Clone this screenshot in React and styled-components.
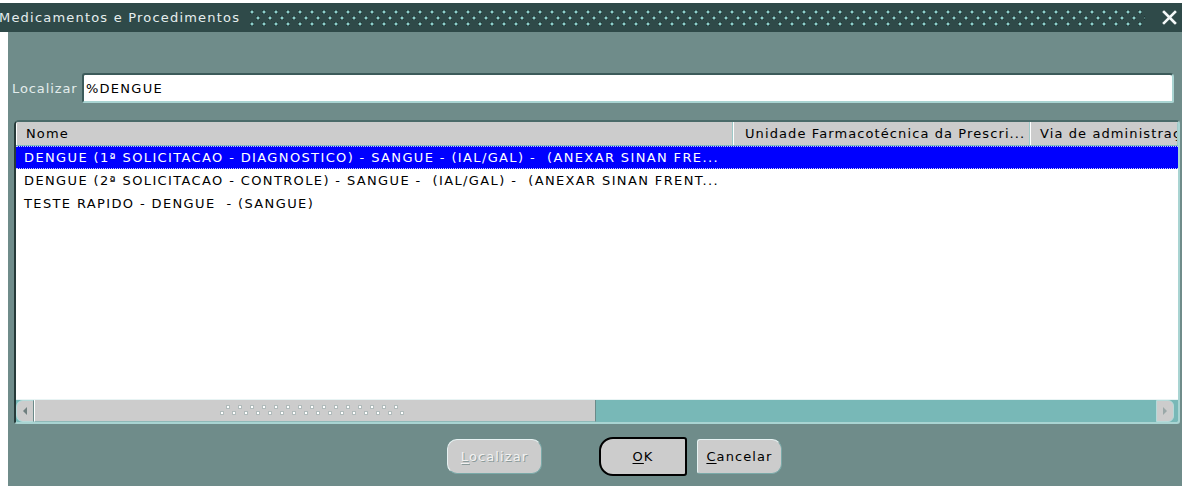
import React from "react";
import styled, { createGlobalStyle } from "styled-components";

const Global = createGlobalStyle`
  html, body { margin: 0; padding: 0; background: #ffffff; }
  body { font-family: "DejaVu Sans", "Liberation Sans", sans-serif; }
  * { box-sizing: border-box; }
`;

const Window = styled.div`
  width: 1182px;
  height: 486px;
  display: flex;
  flex-direction: column;
  padding-top: 3px;
  overflow: hidden;
  font-size: 13px;
  letter-spacing: 1.25px;
`;

const TitleBar = styled.div`
  height: 29px;
  flex: none;
  background: #2f4a49;
  display: flex;
  align-items: center;
  padding-right: 5px;
`;

const TitleText = styled.span`
  color: #e6eeee;
  white-space: nowrap;
  margin-left: -1px;
  letter-spacing: 1.2px;
`;

/* raised teal studs along the title bar, drawn as a tiled pattern */
const Grip = styled.div`
  flex: 1;
  height: 16px;
  margin: 0 16px 0 10px;
  background-image:
    radial-gradient(circle at 2px 2px, #8fd0cc 1.2px, #0f2423 1.9px, transparent 2.4px),
    radial-gradient(circle at 2px 2px, #8fd0cc 1.2px, #0f2423 1.9px, transparent 2.4px);
  background-size: 12px 12px, 12px 12px;
  background-position: 0 0, 6px 6px;
`;

const CloseBox = styled.div`
  width: 16px;
  height: 16px;
  display: flex;
  align-items: center;
  justify-content: center;
`;

const Body = styled.div`
  flex: 1;
  margin-left: 8px;
  background: #6f8c8a;
  display: flex;
  flex-direction: column;
  padding: 41px 8px 0 4px;
`;

const SearchRow = styled.div`
  display: flex;
  align-items: center;
  height: 30px;
`;

const Label = styled.label`
  color: #e3ecec;
  letter-spacing: 0.9px;
  width: 70px;
  flex: none;
  white-space: nowrap;
  overflow: hidden;
`;

const Input = styled.div`
  flex: 1;
  height: 30px;
  background: #ffffff;
  border: 2px solid #a9d4d2;
  border-top-color: #3c5b5a;
  border-left-color: #3c5b5a;
  border-radius: 3px 4px 2px 2px;
  display: flex;
  align-items: center;
  padding-left: 2px;
  color: #000;
`;

const Grid = styled.div`
  margin: 17px -6px 0 2px;
  height: 304px;
  display: flex;
  flex-direction: column;
  border: 2px solid #a9d4d2;
  border-left-color: #263a39;
  border-top-color: #4a6a69;
  border-radius: 5px 4px 3px 3px;
  background: #ffffff;
  overflow: hidden;
`;

const HeaderRow = styled.div`
  display: flex;
  height: 24px;
  flex: none;
  background: #cccccc;
  border-bottom: 1px solid #7fbcbb;
`;

const HeaderCell = styled.div`
  width: ${(p) => p.$w}px;
  flex: ${(p) => (p.$grow ? 1 : "none")};
  padding-left: ${(p) => p.$pad}px;
  display: flex;
  align-items: center;
  letter-spacing: 1.1px;
  color: #000;
  white-space: nowrap;
  overflow: hidden;
  border-left: 1px solid #ffffff;
  border-right: 1px solid #9ec9c8;
`;

const Rows = styled.div`
  flex: 1;
  display: flex;
  flex-direction: column;
  background: #ffffff;
`;

const Row = styled.div`
  height: 23px;
  flex: none;
  display: flex;
  align-items: center;
  padding-left: 8px;
  white-space: pre;
  letter-spacing: 1.37px;
  color: ${(p) => (p.$selected ? "#ffffff" : "#000000")};
  background: ${(p) => (p.$selected ? "#0000ff" : "transparent")};
  border-top: 1px dotted ${(p) => (p.$selected ? "#c8c8ff" : "transparent")};
  border-bottom: 1px dotted ${(p) => (p.$selected ? "#c8c8ff" : "transparent")};
`;

const ScrollBar = styled.div`
  height: 23px;
  flex: none;
  display: flex;
  background: #78b8b7;
  border-top: 1px solid #e8f4f4;
  padding-right: 4px;
`;

const ArrowBtn = styled.div`
  width: 18px;
  flex: none;
  background: #cccccc;
  display: flex;
  align-items: center;
  justify-content: center;
  border-radius: ${(p) => (p.$side === "left" ? "7px 0 0 7px" : "0 6px 6px 0")};
  border: 1px solid #b5dad9;
  border-right-color: ${(p) => (p.$side === "left" ? "#6b8a89" : "#b5dad9")};
  margin-left: ${(p) => (p.$side === "right" ? "auto" : "0")};
`;

const Thumb = styled.div`
  width: 562px;
  flex: none;
  background: #cccccc;
  border-left: 1px solid #ffffff;
  border-right: 1px solid #6b8a89;
  border-bottom: 1px solid #8fb9b8;
  display: flex;
  align-items: center;
  justify-content: center;
`;

const ThumbGrip = styled.div`
  width: 184px;
  height: 12px;
  margin-right: 6px;
  background-image:
    radial-gradient(circle at 2px 2px, #ffffff 1.1px, #8a9c9c 1.8px, transparent 2.3px),
    radial-gradient(circle at 2px 2px, #ffffff 1.1px, #8a9c9c 1.8px, transparent 2.3px);
  background-size: 12px 12px, 12px 12px;
  background-position: 6px 0, 0 6px;
`;

const ButtonRow = styled.div`
  display: flex;
  justify-content: center;
  align-items: center;
  margin-top: 13px;
  padding-left: 43px;
  gap: 10px;
`;

const Button = styled.button`
  font-family: "DejaVu Sans", "Liberation Sans", sans-serif;
  font-size: 13px;
  letter-spacing: 1.1px;
  height: ${(p) => (p.$default ? 39 : 35)}px;
  width: ${(p) => p.$w}px;
  padding: 0;
  background: #cccccc;
  color: ${(p) => (p.$disabled ? "#f2f2f2" : "#000000")};
  text-shadow: ${(p) => (p.$disabled ? "1px 1px 0 #8a9a9a" : "none")};
  border: ${(p) => (p.$default ? "2px solid #000000" : "1px solid #e6f2f2")};
  border-bottom-color: ${(p) => (p.$default ? "#000" : "#7aa9a8")};
  border-right-color: ${(p) => (p.$default ? "#000" : "#7aa9a8")};
  border-radius: ${(p) => p.$radius};
  margin-left: ${(p) => p.$ml || 0}px;
`;

const Key = styled.span`
  text-decoration: underline;
  text-underline-offset: 2px;
`;

const rows = [
  "DENGUE (1ª SOLICITACAO - DIAGNOSTICO) - SANGUE - (IAL/GAL) -  (ANEXAR SINAN FRE...",
  "DENGUE (2ª SOLICITACAO - CONTROLE) - SANGUE -  (IAL/GAL) -  (ANEXAR SINAN FRENT...",
  "TESTE RAPIDO - DENGUE  - (SANGUE)",
];

export default function App() {
  return (
    <>
      <Global />
      <Window>
        <TitleBar>
          <TitleText>Medicamentos e Procedimentos</TitleText>
          <Grip />
          <CloseBox>
            <svg width="15" height="15" viewBox="0 0 15 15">
              <path d="M2 2 L13 13 M13 2 L2 13" stroke="#f4f8f8" strokeWidth="2.6" strokeLinecap="square" />
            </svg>
          </CloseBox>
        </TitleBar>
        <Body>
          <SearchRow>
            <Label>Localizar</Label>
            <Input>%DENGUE</Input>
          </SearchRow>
          <Grid>
            <HeaderRow>
              <HeaderCell $w={717} $pad={9}>Nome</HeaderCell>
              <HeaderCell $w={297} $pad={11}>Unidade Farmacotécnica da Prescri...</HeaderCell>
              <HeaderCell $grow $pad={9}>Via de administração</HeaderCell>
            </HeaderRow>
            <Rows>
              {rows.map((r, i) => (
                <Row key={i} $selected={i === 0}>{r}</Row>
              ))}
            </Rows>
            <ScrollBar>
              <ArrowBtn $side="left">
                <svg width="6" height="10" viewBox="0 0 6 10">
                  <path d="M5 1 L1 5 L5 9 Z" fill="#6f7f7f" />
                </svg>
              </ArrowBtn>
              <Thumb>
                <ThumbGrip />
              </Thumb>
              <ArrowBtn $side="right">
                <svg width="6" height="10" viewBox="0 0 6 10">
                  <path d="M1 1 L5 5 L1 9 Z" fill="#9aa8a8" />
                </svg>
              </ArrowBtn>
            </ScrollBar>
          </Grid>
          <ButtonRow>
            <Button $w={95} $disabled $radius="10px">
              <Key>L</Key>ocalizar
            </Button>
            <Button $w={88} $default $radius="14px 3px 3px 14px" $ml={47}>
              <Key>O</Key>K
            </Button>
            <Button $w={85} $radius="3px 10px 10px 3px">
              <Key>C</Key>ancelar
            </Button>
          </ButtonRow>
        </Body>
      </Window>
    </>
  );
}
